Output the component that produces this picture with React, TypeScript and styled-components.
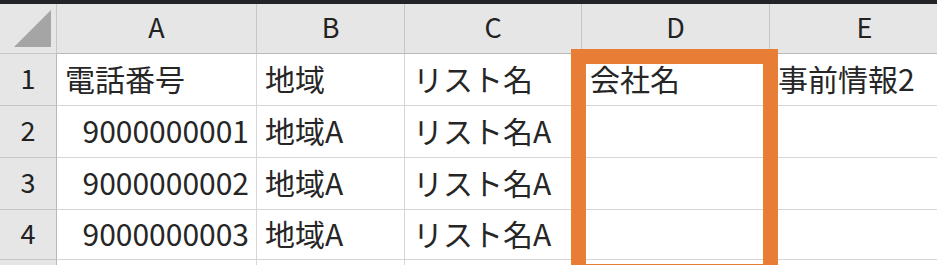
import React from 'react'
import styled, { createGlobalStyle } from 'styled-components'

const GlobalStyle = createGlobalStyle`
  html, body {
    margin: 0;
    padding: 0;
    background: #ffffff;
    overflow: hidden;
  }
`

const columns = ['A', 'B', 'C', 'D', 'E']
const colWidths = [57, 200, 148, 177, 188]
const rowHeights = [50, 52, 52, 52, 50, 30]

const rows: string[][] = [
  ['電話番号', '地域', 'リスト名', '会社名', '事前情報2'],
  ['9000000001', '地域A', 'リスト名A', '', ''],
  ['9000000002', '地域A', 'リスト名A', '', ''],
  ['9000000003', '地域A', 'リスト名A', '', ''],
  ['', '', '', '', ''],
]

const Sheet = () => {
  return (
    <Frame>
      <TopBar />
      <Grid>
        <Corner>
          <svg width="38" height="38" viewBox="0 0 38 38">
            <polygon points="37,0 37,37 0,37" fill="#a5a5a5" />
          </svg>
        </Corner>
        {columns.map((c) => (
          <ColHead key={c}>{c}</ColHead>
        ))}
        {rows.map((r, ri) => (
          <React.Fragment key={ri}>
            <RowHead>{ri < 4 ? ri + 1 : ''}</RowHead>
            {r.map((v, ci) => (
              <Cell key={ci} $numeric={/^\d+$/.test(v)}>
                {v}
              </Cell>
            ))}
          </React.Fragment>
        ))}
      </Grid>
      <Highlight />
    </Frame>
  )
}

export default function App() {
  return (
    <>
      <GlobalStyle />
      <Sheet />
    </>
  )
}

const Frame = styled.div`
  position: relative;
  width: 937px;
  height: 265px;
  overflow: hidden;
  background: #ffffff;
  font-family: "Noto Sans CJK JP", "Noto Sans", sans-serif;
`

const TopBar = styled.div`
  height: 4px;
  background: #212327;
`

const Grid = styled.div`
  display: grid;
  grid-template-columns: ${colWidths.map((w) => `${w}px`).join(' ')} 1fr;
  grid-template-rows: ${rowHeights.map((h) => `${h}px`).join(' ')};
  width: 960px;
`

const Corner = styled.div`
  background: #e6e6e6;
  border-right: 1px solid #c6c6c6;
  border-bottom: 1px solid #c6c6c6;
  display: flex;
  align-items: flex-end;
  justify-content: flex-end;
  padding: 0 4px 5px 0;
  box-sizing: border-box;
`

const ColHead = styled.div`
  background: #e6e6e6;
  border-right: 1px solid #c6c6c6;
  border-bottom: 1px solid #b8b8b8;
  box-sizing: border-box;
  display: flex;
  align-items: center;
  justify-content: center;
  font-size: 27px;
  color: #222222;
  padding-bottom: 4px;
`

const RowHead = styled.div`
  background: #e6e6e6;
  border-right: 1px solid #b8b8b8;
  border-bottom: 1px solid #c6c6c6;
  box-sizing: border-box;
  display: flex;
  align-items: center;
  justify-content: center;
  font-size: 27px;
  color: #222222;
  padding-bottom: 4px;
`

const Cell = styled.div<{ $numeric: boolean }>`
  border-right: 1px solid #d6d6d6;
  border-bottom: 1px solid #d6d6d6;
  box-sizing: border-box;
  display: flex;
  align-items: center;
  justify-content: ${(p) => (p.$numeric ? 'flex-end' : 'flex-start')};
  padding: 0 7px 4px 8px;
  font-size: 30px;
  color: #262626;
  white-space: nowrap;
`

const Highlight = styled.div`
  position: absolute;
  left: 571px;
  top: 49px;
  width: 207px;
  height: 230px;
  border: 15px solid #e87e35;
  box-sizing: border-box;
  pointer-events: none;
`
